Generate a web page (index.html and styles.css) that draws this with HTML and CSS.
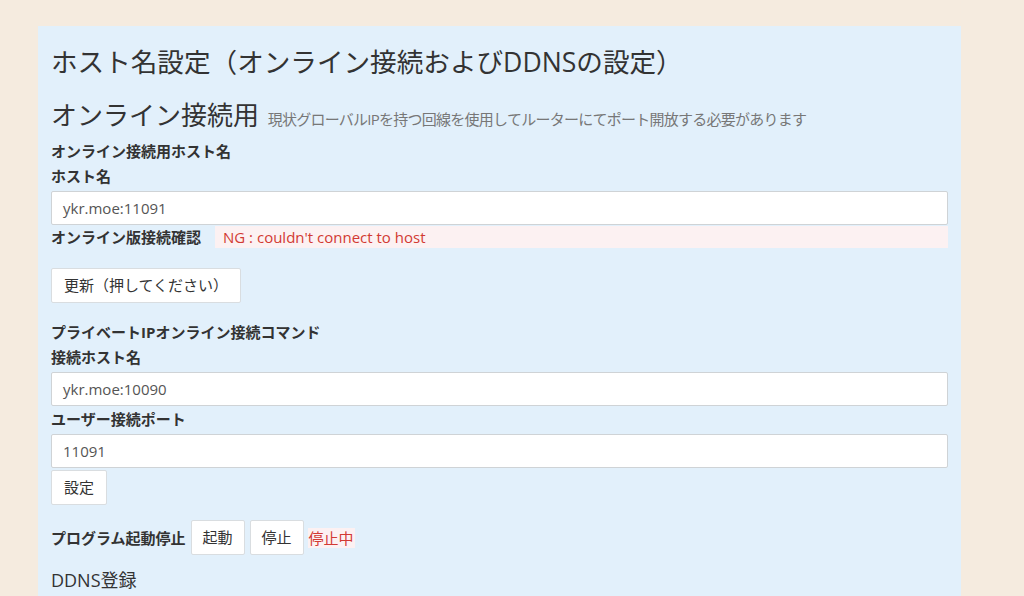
FILE: index.html
```html
<!DOCTYPE html>
<html lang="ja">
<head>
<meta charset="utf-8">
<title>ホスト名設定</title>
<link rel="stylesheet" href="styles.css">
</head>
<body>
<div class="panel">
  <h2 class="title">ホスト名設定（オンライン接続およびDDNSの設定）</h2>
  <h3 class="subhead">オンライン接続用 <small class="note">現状グローバルIPを持つ回線を使用してルーターにてポート開放する必要があります</small></h3>

  <div class="label first">オンライン接続用ホスト名</div>
  <div class="label">ホスト名</div>
  <div class="input">ykr.moe:11091</div>
  <div class="status-row">
    <span class="label inline">オンライン版接続確認</span>
    <span class="status">NG : couldn't connect to host</span>
  </div>
  <div class="btn-wrap"><button class="btn">更新（押してください）</button></div>

  <div class="label sect">プライベートIPオンライン接続コマンド</div>
  <div class="label">接続ホスト名</div>
  <div class="input">ykr.moe:10090</div>
  <div class="label tight">ユーザー接続ポート</div>
  <div class="input">11091</div>
  <div class="btn-wrap tight"><button class="btn">設定</button></div>

  <div class="prog-row">
    <span class="label inline">プログラム起動停止</span>
    <button class="btn narrow">起動</button>
    <button class="btn narrow">停止</button>
    <span class="stopped">停止中</span>
  </div>

  <h4 class="ddns">DDNS登録</h4>
</div>
</body>
</html>
```

FILE: styles.css
```css
html, body {
  margin: 0;
  padding: 0;
  background: #f5ebdf;
  height: 100%;
  overflow: hidden;
}
body {
  font-family: "Open Sans", "Noto Sans CJK JP", sans-serif;
  color: #333;
}
.panel {
  margin: 26px 0 0 38px;
  width: 923px;
  box-sizing: border-box;
  padding: 18px 13px 0;
  background: #e2f0fb;
  height: 570px;
}
.title {
  margin: 0 0 18px;
  font-size: 26.6px;
  line-height: 36px;
  font-weight: 400;
  color: #333;
  white-space: nowrap;
}
.subhead {
  margin: 0;
  font-size: 26px;
  line-height: 34px;
  font-weight: 400;
  color: #333;
  white-space: nowrap;
}
.note {
  font-size: 15px;
  color: #777;
  letter-spacing: -0.75px;
  margin-left: 2px;
}
.label {
  display: block;
  font-size: 15px;
  line-height: 20px;
  font-weight: 700;
  color: #333;
  margin-bottom: 5px;
}
.label.first {
  margin-top: 5px;
}
.label.inline {
  display: inline-block;
  margin: 0;
}
.label.sect {
  margin-top: 19px;
}
.label.tight {
  margin-top: 3px;
}
.input {
  margin-top: 1px;
  height: 34px;
  box-sizing: border-box;
  background: #fff;
  border: 1px solid #cfd3d6;
  border-radius: 2px;
  padding: 0 11px;
  font-size: 15px;
  line-height: 32px;
  color: #555;
}
.status-row {
  display: flex;
  align-items: center;
  height: 22px;
  margin-top: 1px;
}
.status {
  flex: 1;
  margin-left: 14px;
  padding-left: 8px;
  height: 22px;
  line-height: 22px;
  font-size: 15px;
  color: #d23a33;
  background: #fcf1f2;
}
.btn-wrap {
  margin-top: 20px;
}
.btn-wrap.tight {
  margin-top: 2px;
}
.btn {
  font-family: "Open Sans", "Noto Sans CJK JP", sans-serif;
  font-size: 15px;
  line-height: 21px;
  color: #333;
  background: #fff;
  border: 1px solid #d9dde0;
  border-radius: 2px;
  padding: 6px 12px;
  margin: 0;
  cursor: pointer;
}
.btn.narrow {
  padding: 6px 11px;
}
.prog-row {
  display: flex;
  align-items: center;
  gap: 5px;
  margin-top: 15px;
}
.stopped {
  font-size: 15px;
  line-height: 20px;
  color: #d23a33;
  background: #fcf1f2;
  padding: 0 1px;
  margin-left: -1px;
}
.ddns {
  margin: 12px 0 0;
  font-size: 18px;
  line-height: 26px;
  font-weight: 400;
  color: #333;
}
```
